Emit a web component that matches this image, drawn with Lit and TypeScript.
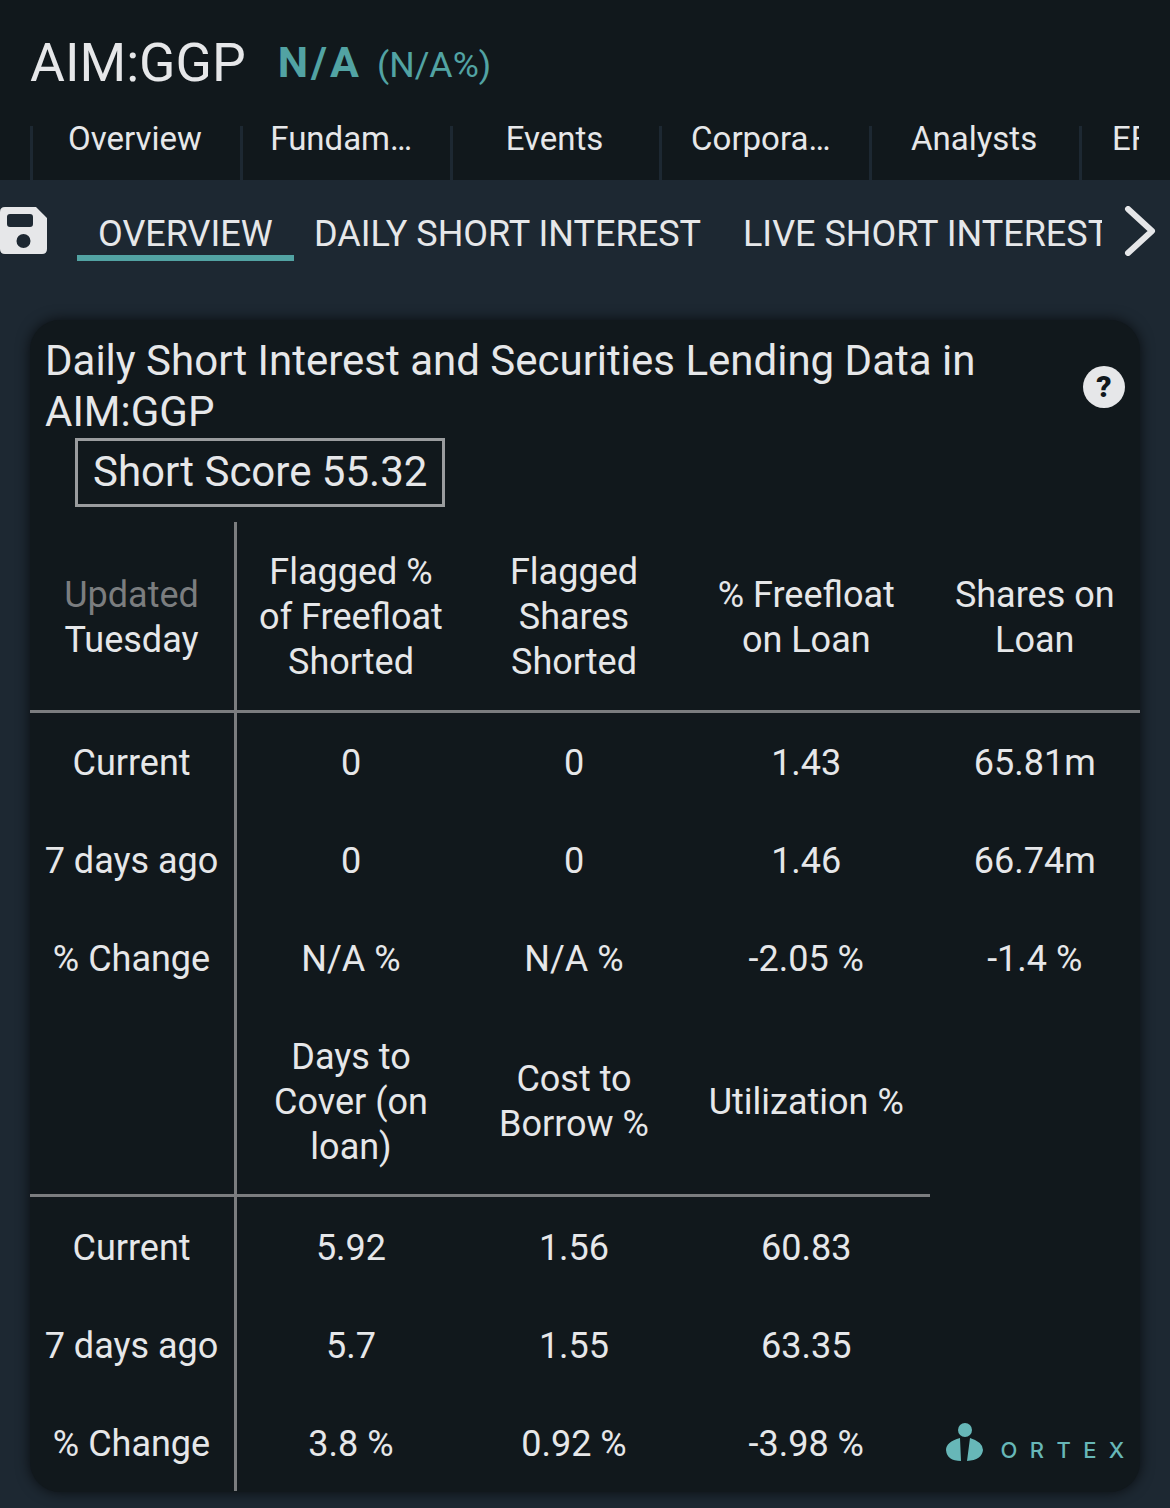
import { LitElement, html, css } from "lit";
import { customElement } from "lit/decorators.js";

const tabs = ["Overview", "Fundam…", "Events", "Corpora…", "Analysts", "EF"];

const table1 = {
  head: ["Flagged %<br>of Freefloat<br>Shorted", "Flagged<br>Shares<br>Shorted", "% Freefloat<br>on Loan", "Shares on<br>Loan"],
  rows: [
    ["Current", "0", "0", "1.43", "65.81m"],
    ["7 days ago", "0", "0", "1.46", "66.74m"],
    ["% Change", "N/A %", "N/A %", "-2.05 %", "-1.4 %"],
  ],
};
const table2 = {
  head: ["Days to<br>Cover (on<br>loan)", "Cost to<br>Borrow %", "Utilization %"],
  rows: [
    ["Current", "5.92", "1.56", "60.83"],
    ["7 days ago", "5.7", "1.55", "63.35"],
    ["% Change", "3.8 %", "0.92 %", "-3.98 %"],
  ],
};

const lines = (s: string) => {
  const p = s.split("<br>");
  return p.map((x, i) => (i < p.length - 1 ? html`${x}<br />` : x));
};

@customElement("app-root")
export class AppRoot extends LitElement {
  static styles = css`
    :host {
      display: block;
      width: 1170px;
      height: 1508px;
      overflow: hidden;
      background: #1d2832;
      font-family: Roboto, sans-serif;
      color: #e6e7e9;
      font-weight: 400;
    }
    .top {
      background: #11181c;
      height: 180px;
      box-sizing: border-box;
      padding: 0 30px 0 30px;
      display: flex;
      flex-direction: column;
    }
    .quote {
      height: 118px;
      display: flex;
      align-items: flex-start;
      flex: none;
    }
    .sym {
      font-size: 53.5px;
      line-height: 62px;
      margin-top: 32px;
    }
    .change {
      display: flex;
      align-items: baseline;
      margin-top: 37px;
      margin-left: 32px;
      line-height: 50px;
    }
    .chg {
      font-size: 43px;
      font-weight: 700;
      color: #52a3a3;
      letter-spacing: 3px;
    }
    .pct {
      font-size: 35.7px;
      color: #52a3a3;
      margin-left: 15px;
    }
    .tabs {
      display: flex;
      height: 62px;
      width: 1110px;
      overflow: hidden;
      flex: none;
    }
    .tab {
      flex: 0 0 209.8px;
      box-sizing: border-box;
      height: 54px;
      margin-top: 8px;
      border-left: 3px solid #1d2832;
      padding-right: 3px;
      text-align: center;
      font-size: 33px;
      line-height: 26px;
    }
    .tab.trunc {
      padding-right: 10px;
    }
    .tab.cut {
      text-align: left;
      padding: 0 0 0 30px;
      flex: 0 0 60px;
      overflow: hidden;
      white-space: nowrap;
    }
    .subbar {
      height: 140px;
      display: flex;
      align-items: flex-start;
      position: relative;
    }
    .save {
      width: 48px;
      height: 48px;
      margin-top: 27px;
      flex: none;
    }
    .subtabs {
      margin-left: 29px;
      width: 1025px;
      display: flex;
      overflow: hidden;
      white-space: nowrap;
      font-size: 36px;
      flex: none;
      padding-top: 31px;
      height: 50px;
    }
    .st {
      height: 50px;
      line-height: 46px;
      padding: 0 21px 0 20px;
      box-sizing: border-box;
      flex: none;
    }
    .st.on {
      padding: 0 23px 0 21px;
      width: 217px;
      border-bottom: 6px solid #52a3a3;
    }
    .st.live {
      padding-left: 21px;
    }
    .chev {
      width: 34px;
      height: 50px;
      margin-top: 26px;
      margin-left: 22px;
      flex: none;
    }
    .card {
      margin: 0 30px;
      height: 1172px;
      background: #11181c;
      border-radius: 30px;
      box-shadow: 0 0 14px rgba(0, 0, 0, 0.7);
      box-sizing: border-box;
      padding-top: 16px;
    }
    .head {
      display: flex;
      justify-content: space-between;
      align-items: center;
      padding: 0 15px;
    }
    .title {
      font-size: 42px;
      line-height: 50.5px;
      width: 980px;
    }
    .help {
      width: 42px;
      height: 42px;
      border-radius: 50%;
      background: #e6e7e9;
      color: #11181c;
      font-size: 30px;
      line-height: 42px;
      font-weight: 900;
      text-align: center;
      flex: none;
    }
    .score {
      display: inline-block;
      box-sizing: border-box;
      margin: 1px 0 0 45px;
      width: 370px;
      height: 69px;
      border: 3px solid #9a9c9e;
      font-size: 42px;
      line-height: 62px;
      padding-left: 15px;
    }
    .grid {
      margin-top: 15px;
      display: grid;
      grid-template-columns: 207px 228px 218px 246.5px 210.5px;
      font-size: 36px;
      line-height: 45px;
      text-align: center;
    }
    .c {
      display: flex;
      align-items: center;
      justify-content: center;
      height: 98px;
      box-sizing: border-box;
      padding-top: 2px;
    }
    .c.low {
      padding-top: 4px;
    }
    .c.lab {
      border-right: 3px solid #7b7d7f;
      padding-right: 1px;
    }
    .c.h {
      height: 191px;
      border-bottom: 3px solid #7b7d7f;
      padding-top: 3px;
    }
    .c.h2 {
      height: 190px;
      border-bottom: 3px solid #7b7d7f;
      padding-top: 3px;
    }
    .c.none {
      border: 0;
    }
    .dim {
      color: #7b7d7f;
    }
    .logo {
      display: flex;
      align-items: flex-start;
      gap: 17px;
      margin-left: 16px;
      width: 220px;
      height: 98px;
      padding-top: 30px;
      box-sizing: border-box;
      color: #67b7b8;
      font-family: Inter, sans-serif;
      font-size: 22px;
      font-weight: 500;
      letter-spacing: 12.4px;
      line-height: 24px;
    }
    .logo span {
      margin-top: 15px;
    }
    .logo svg {
      width: 38px;
      height: 40px;
      flex: none;
    }
  `;

  render() {
    return html`
      <div class="top">
        <div class="quote">
          <span class="sym">AIM:GGP</span>
          <div class="change">
            <span class="chg">N/A</span>
            <span class="pct">(N/A%)</span>
          </div>
        </div>
        <div class="tabs">
          ${tabs.map(
            (t, i) => html`<div class="tab ${i === 5 ? "cut" : ""} ${t.endsWith("…") ? "trunc" : ""}">${t}</div>`
          )}
        </div>
      </div>
      <div class="subbar">
        <svg class="save" viewBox="0 0 48 48">
          <path
            fill="#e6e7e9"
            fill-rule="evenodd"
            d="M5 0H36L47 11V42Q47 47 42 47H5Q0 47 0 42V5Q0 0 5 0ZM10 7Q7 7 7 10V17Q7 20 10 20H30Q33 20 33 17V10Q33 7 30 7ZM23.5 27A7 7 0 1 0 23.5 41A7 7 0 1 0 23.5 27Z"
          />
        </svg>
        <div class="subtabs">
          <div class="st on">OVERVIEW</div>
          <div class="st">DAILY SHORT INTEREST</div>
          <div class="st live">LIVE SHORT INTEREST</div>
        </div>
        <svg class="chev" viewBox="0 0 34 50">
          <path d="M4 3L28 25L4 47" fill="none" stroke="#e6e7e9" stroke-width="6" stroke-linecap="round" stroke-linejoin="round" />
        </svg>
      </div>
      <div class="card">
        <div class="head">
          <div class="title">Daily Short Interest and Securities Lending Data in AIM:GGP</div>
          <div class="help">?</div>
        </div>
        <div class="score">Short Score 55.32</div>
        <div class="grid">
          <div class="c lab h"><div><span class="dim">Updated</span><br />Tuesday</div></div>
          ${table1.head.map((h) => html`<div class="c h"><div>${lines(h)}</div></div>`)}
          ${table1.rows.map((r) => r.map((v, i) => html`<div class="c ${i === 0 ? "lab" : ""}">${v}</div>`))}
          <div class="c lab h2"></div>
          ${table2.head.map((h) => html`<div class="c h2"><div>${lines(h)}</div></div>`)}
          <div class="c none h2"></div>
          ${table2.rows.map(
            (r, ri) => html`
              ${r.map((v, i) => html`<div class="c low ${i === 0 ? "lab" : ""}">${v}</div>`)}
              ${ri === 2
                ? html`<div class="logo">
                    <svg viewBox="0 0 38 40">
                      <circle cx="19" cy="7" r="7" fill="#67b7b8" />
                      <path fill="#67b7b8" d="M14 15L15 38Q1 38 0 27Q0 19 14 15ZM24 15Q37 19 37 27Q36 37 21 38Z" />
                    </svg>
                    <span>ORTEX</span>
                  </div>`
                : html`<div></div>`}
            `
          )}
        </div>
      </div>
    `;
  }
}
